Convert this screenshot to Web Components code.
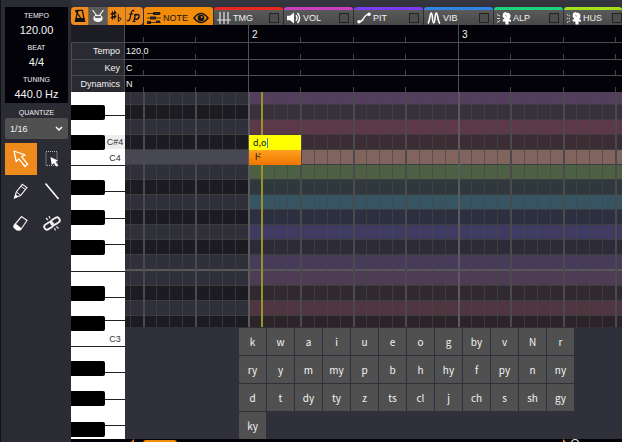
<!DOCTYPE html>
<html lang="en">
<head>
<meta charset="utf-8">
<title>Voice editor</title>
<style>
html,body{margin:0;height:100%;overflow:hidden;background:#2b2b33;color:#f2f2f2;font:9px/12px "Liberation Sans","Noto Sans CJK JP",sans-serif}
</style>
</head>
<body>
<voice-editor></voice-editor>
<script>
const define=(name,html,init)=>customElements.define(name,class extends HTMLElement{
  constructor(){
    super();
    const root=this.attachShadow({mode:'open'});
    root.innerHTML='<style>*{box-sizing:border-box}button{border:0;margin:0;padding:0;color:inherit;font:inherit;background:none}svg{display:block}</style>'+html;
  }
  connectedCallback(){ if(init&&!this.ready){this.ready=true;init(this,this.shadowRoot);} }
});

const singer='<path d="M5.500 5.500 6 2.500 8 1l2 .8L12 2l1.500 2-.3 3-1.200 1 2.500 1.200-.6 1.600-2.500-.3.200 3H8.500l-.2-3-2.600 0V8.500L7.500 8z" fill="#fff"/><path d="m8.500 4 1 1.500" stroke="#777" stroke-width=".8" fill="none"/>';
const icons={
  metronome:'<svg width="14" height="16" viewBox="0 0 14 16"><path d="M3 11 4.6 2.3H9.4L11 11M2.2 2.2 8 10.5" fill="none" stroke="#111" stroke-width="1.3"/><path d="M2.5 10h9l1 4h-11z" fill="#111"/><path d="M3 1.6 5.8 3.4 4 5.2z" fill="#111"/></svg>',
  drum:'<svg width="14" height="16" viewBox="0 0 14 16"><path d="M3 9.2v2.4c0 2.4 8 2.4 8 0V9.2" fill="#ddd" stroke="#fff"/><ellipse cx="7" cy="9" rx="4" ry="1.8" fill="#666" stroke="#fff"/><path d="M1.5 2 6 8M12.5 2 8 8M3 10.5l4 2.5 4-2.5" fill="none" stroke="#fff" stroke-width="1.1"/></svg>',
  accidentals:'<svg width="14" height="16" viewBox="0 0 14 16"><path d="M3.4 3.2v8.6M5.7 2.4V11M9.3 6.2v7.2c2.6-1.2 3-3.2 1.8-3.6q-1-.2-1.8.8" fill="none" stroke="#111"/><path d="M1.8 6.2 7.3 4.6M1.8 9.7 7.3 8.1" stroke="#111" stroke-width="1.7"/></svg>',
  dynamics:'<svg width="16" height="16" viewBox="0 0 16 16"><path d="M8.2 3.2C6.6 1.4 5.6 3 5 6L4 10.5C3.5 12.8 2.4 13.2 1.2 12.2M3 6h4.2M8 7.3l1.5-.8-1.8 7M6.5 13.5h3" fill="none" stroke="#111" stroke-width="1.2"/><path d="M9.3 7.8c1.6-2 4.4-1.6 3.8 1-.5 2.2-3 3.3-4.5 1.7" fill="none" stroke="#111" stroke-width="1.4"/></svg>',
  note:'<svg width="14" height="14" viewBox="0 0 14 14"><path d="M0 2.500h14M0 7h14M0 11.500h14" stroke="#222" stroke-width=".8"/><path d="M6 1h7v3H6zM3 5.500h6v3H3zM0 10h4v3H0zM9 9.500h4v2.400H9z" fill="#222"/></svg>',
  eye:'<svg width="16" height="12" viewBox="0 0 16 12"><path d="M1 6q7-9 14 0-7 9-14 0Z" fill="none" stroke="#151515" stroke-width="1.5"/><circle cx="8" cy="6" r="3.3" fill="#151515"/><circle cx="8.7" cy="5" r="1" fill="#f08c14"/></svg>',
  timing:'<svg width="14" height="14" viewBox="0 0 14 14"><path d="M3 1v12M7 1v12M11 1v12M0 9h14" stroke="#e4e4e4" stroke-width="1.2"/></svg>',
  volume:'<svg width="14" height="14" viewBox="0 0 14 14"><path d="M0 4.7h3L7 1.5v11L3 9.3H0z" fill="#fff"/><path d="M9 4.2q2 2.8 0 5.6M10.5 2q4.2 5 0 10" fill="none" stroke="#fff" stroke-width="1.4"/></svg>',
  pitch:'<svg width="14" height="14" viewBox="0 0 14 14"><path d="M1.8 10.8C8 11 5 3.6 12 3.3" fill="none" stroke="#fff" stroke-width="1.3"/><circle cx="2" cy="10.8" r="1.8" fill="#fff"/><circle cx="12" cy="3.3" r="1.8" fill="#fff"/></svg>',
  vibrato:'<svg width="14" height="14" viewBox="0 0 14 14"><path d="M1 12.5C3 10 2.8 2 4.3 2S5 12 6.7 12 7.600 2 9.300 2 10.500 11 13 12.500" fill="none" stroke="#fff" stroke-width="1.600"/></svg>',
  alpha:`<svg width="14" height="14" viewBox="0 0 14 14"><path d="M0 3.500 3 5M0 7.500h3M0 11.500 3 9.500" stroke="#ddd"/>${singer}</svg>`,
  husky:`<svg width="14" height="14" viewBox="0 0 14 14"><path d="M0 3.500 3 5M0 7.500h3M0 11.500 3 9.500" stroke="#ddd" stroke-width="1.200" stroke-dasharray="1.200 .8"/>${singer}</svg>`,
  arrow:'<svg width="20" height="20" viewBox="0 0 20 20"><path d="m3 2 2.200 10.500 2.700-2.600 6 7.600 2.700-2.300-6-7.500L14.200 6z" fill="none" stroke="#fff" stroke-width="1.300" stroke-linejoin="round"/></svg>',
  marquee:'<svg width="20" height="20" viewBox="0 0 20 20"><path d="M4 2.500h11v14H4z" fill="none" stroke="#bbb" stroke-dasharray="1 1"/><path d="m8.500 8 1.200 8 2-1.700 3 3.500 1.700-1.500-2.900-3.400 2.300-1.500z" fill="#fff"/></svg>',
  pencil:'<svg width="20" height="20" viewBox="0 0 20 20"><path d="m3.500 17 1.800-6 6-7.700 4.600 3.300-6.300 8z" fill="none" stroke="#eee" stroke-width="1.200"/><path d="m5.500 11 4 3.200M9.800 5.200l4.600 3.400" stroke="#eee"/><path d="m3.300 17.200 1.200-4 2.600 2z" fill="#fff"/></svg>',
  line:'<svg width="20" height="20" viewBox="0 0 20 20"><path d="m3.500 2.500 13 15.500" stroke="#fff" stroke-width="1.600"/></svg>',
  eraser:'<svg width="20" height="20" viewBox="0 0 20 20"><path d="M3 12.500 10.500 3.500l5.500 4L9.500 17H6L3 14.500z" fill="none" stroke="#eee" stroke-width="1.200"/><path d="M3.500 11.500 9.500 17H6L2.700 14z" fill="#fff"/><path d="m4.500 10.500 6 4.800-1.500 2H6l-3.300-3z" fill="#fff"/></svg>',
  unlink:'<svg width="20" height="20" viewBox="0 0 20 20"><g fill="none" stroke="#eee" stroke-width="1.900"><rect x="2" y="10" width="9.500" height="5.500" rx="2.700" transform="rotate(-32 6.700 12.700)"/><rect x="8.500" y="5.500" width="9.500" height="5.500" rx="2.700" transform="rotate(-32 13.200 8.200)"/></g><path d="M7 3 8 5.500M4 5l2 2M13.500 17.500l-1-2.500M16.500 15.500l-2-2" stroke="#eee" stroke-width="1.100"/></svg>'
};

define('meter-readout',`<style>
:host{display:block;text-align:center}
div{font-size:7px;line-height:10px}
output{display:block;font-size:11px;line-height:18px}
</style><div><slot name="label"></slot></div><output><slot></slot></output>`);

define('icon-tool',`<style>
:host{display:block}
button{display:flex;width:100%;height:100%;align-items:center;justify-content:center}
:host([active]) button{background:#ee8b1c}
:host([muted]) button{background:#5b5b5b}
</style><button type="button"></button>`,(el,r)=>{
  const b=r.querySelector('button');b.innerHTML=icons[el.getAttribute('icon')];b.setAttribute('aria-label',el.getAttribute('icon'));
});

define('side-panel',`<style>
:host{display:flex;flex-direction:column;padding:7px 3px 0 4px;border-left:1px solid #111}
.meters{background:#020208;padding:4px 0 0;height:96px;display:flex;flex-direction:column;gap:4px}
label{font-size:7px;line-height:10px;text-align:center;padding:5px 0 0;height:15px}
select{appearance:none;width:100%;height:21px;border:0;border-radius:2px;color:#f2f2f2;font:inherit;padding:0 6px 0 5px;
 background:#505050 url("data:image/svg+xml,%3Csvg xmlns='http://www.w3.org/2000/svg' width='8' height='6'%3E%3Cpath d='m1 1 3 3 3-3' fill='none' stroke='white' stroke-width='1.500'/%3E%3C/svg%3E") no-repeat right 5px center}
.tools{display:grid;grid-template-columns:1fr 1fr;grid-auto-rows:32px;padding-top:4px}
</style>
<div class="meters">
<meter-readout><span slot="label">TEMPO</span>120.00</meter-readout>
<meter-readout><span slot="label">BEAT</span>4/4</meter-readout>
<meter-readout><span slot="label">TUNING</span>440.0 Hz</meter-readout>
</div>
<label for="q">QUANTIZE</label><select id="q"><option>1/16</option></select>
<div class="tools"><icon-tool icon="arrow" active></icon-tool><icon-tool icon="marquee"></icon-tool><icon-tool icon="pencil"></icon-tool><icon-tool icon="line"></icon-tool><icon-tool icon="eraser"></icon-tool><icon-tool icon="unlink"></icon-tool></div>`);

define('lane-tab',`<style>
:host{display:flex;flex:0 0 69px;min-width:0;overflow:hidden;background:linear-gradient(#5a5a5a,#484848);border-top:3px solid var(--tab);border-radius:3px 3px 0 0;align-items:center;padding:0 4px 0 3px}
:host(:last-child){flex:0 1 69px;padding-right:0}
button{display:flex;align-items:center;gap:2px;flex:1 0 auto;height:15px}
:host([active]){background:#f28c0a;color:#151515}
:host([active]) input{display:none}
input{appearance:none;flex:0 1 10px;min-width:0;height:10px;margin:0;border:1px solid #222;background:#4c4c4c}
</style><button type="button"><span class="i"></span><slot></slot></button><input type="checkbox" aria-label="Show lane"><slot name="end"></slot>`,(el,r)=>{
  r.querySelector('.i').innerHTML=icons[el.getAttribute('icon')];
});
define('eye-mark',`<style>:host{display:block}</style>${icons.eye}`);

define('lane-bar',`<style>
:host{display:flex;gap:1px;height:25px;padding-top:7px;background:linear-gradient(#363640,#282830);overflow:hidden}
.flags{display:grid;grid-template-columns:repeat(4,1fr);gap:1px;width:72px;flex:none;border-radius:4px;overflow:hidden;background:#9b651f}
</style>
<div class="flags"><icon-tool icon="metronome" active></icon-tool><icon-tool icon="drum" muted></icon-tool><icon-tool icon="accidentals" active></icon-tool><icon-tool icon="dynamics" active></icon-tool></div>
<lane-tab icon="note" active style="--tab:#f28c0a">NOTE<eye-mark slot="end"></eye-mark></lane-tab>
<lane-tab icon="timing" style="--tab:#e8291f">TMG</lane-tab>
<lane-tab icon="volume" style="--tab:#c93fc0">VOL</lane-tab>
<lane-tab icon="pitch" style="--tab:#7b3df2">PIT</lane-tab>
<lane-tab icon="vibrato" style="--tab:#2e86e0">VIB</lane-tab>
<lane-tab icon="alpha" style="--tab:#20d27b">ALP</lane-tab>
<lane-tab icon="husky" style="--tab:#a4e01c">HUS</lane-tab>`);

// Vertical rules repeat once per 210px measure; the first full measure starts 124px in.
const rules=(xs,w,c)=>{
  let s=[],p=0;
  for(const x of xs){s.push(`transparent ${p}px ${x}px`,`${c} ${x}px ${x+w}px`);p=x+w;}
  s.push(`transparent ${p}px 210px`);
  return `linear-gradient(90deg,${s.join(',')}) -87px 0/210px`;
};

define('time-header',`<style>
:host{display:grid;grid-template-columns:54px minmax(0,1fr);grid-template-rows:18px 17px 16px 16px;background:#020208}
div{border-bottom:1px solid #4d4d50;display:flex;align-items:center;min-width:0}
.l{background:#2a2a31;justify-content:flex-end;padding-right:4px;border-left:1px solid #4d4d50;border-right:1px solid #4d4d50}
.l.top{background:#1c1c25;border-left-color:#1c1c25}
.t{padding-left:1px;white-space:nowrap;background:${rules([0],1,'#505054')} 100% repeat-x,${rules([52,105,157],1,'#444448')} 5px repeat-x;background-position:-87px 0,-87px 100%}
.ruler{padding:3px 0 0 127px;font-size:10px}
.ruler span{flex:0 1 210px;min-width:0}
.ruler span:first-child{flex-shrink:0}
div:nth-last-child(-n+2){border-bottom:0}
</style>
<div class="l top"></div><div class="t ruler"><span>2</span><span>3</span></div>
<div class="l">Tempo</div><div class="t">120.0</div><div class="l">Key</div><div class="t">C</div><div class="l">Dynamics</div><div class="t">N</div>`);

define('piano-keys',`<style>
:host{display:grid;background:#fff;color:#333;overflow:hidden}
.w,.b{grid-area:1/1;display:flex;flex-direction:column}
.w div{border-bottom:1px solid #222;padding:0 0 1px 34px;display:flex;align-items:flex-end;justify-content:center;flex:none}
.w .n{border-bottom-color:#fff}
.w .hover{background:linear-gradient(#fff 19px,#eee 19px);}
.b{padding-top:13px;width:34px}
.b div{height:15px;flex:none;background:#000;border-radius:0 2px 2px 0}
</style><div class="w"></div><div class="b"></div>`,(el,r)=>{
  const keys=[[24],[34,'C#4'],[16,'C4'],[26],[27],[26],[27],[26],[23],[26,'C3'],[26],[27],[26],[14]];
  for(const [h,t] of keys){const d=document.createElement('div');d.style.height=h+'px';d.textContent=t||'';if(t==='C#4')d.className='n hover';r.querySelector('.w').append(d);}
  for(const g of [0,15,30,15,15,31,15,30,15,16]){const d=document.createElement('div');d.style.marginTop=g+'px';r.querySelector('.b').append(d);}
});

define('lyric-note',`<style>
:host{position:absolute;left:124px;top:43px;width:52px;display:block;font:9px/14px "Noto Sans CJK JP",sans-serif;color:#111}
.edit{display:flex;align-items:center;height:15px;background:#ff0;padding-left:4px}
input{width:14px;border:0;padding:0;margin:0;background:none;font:inherit;color:inherit;height:14px;outline:0}
i{width:1px;height:10px;background:#2090ff}
.lyric{height:15px;background:linear-gradient(#ffa320,#f07300);padding-left:4px}
</style><div class="edit"><input aria-label="Lyric" value="d,o"><i></i></div><div class="lyric">ド</div>`);

define('note-grid',`<style>
:host{display:block;position:relative;overflow:hidden}
.row{height:15px;display:grid;grid-template-columns:124px 1fr;border-bottom:1px solid #3d3d3f;background:#30303a}
.row:first-child{height:13px}.row:last-child{height:11px;border:0}
.row.black{background:#1b1b21}.row.root{background:#484854}
.row.octave{height:16px;border-bottom:2px solid #58585a}
.row span{grid-column:2}
.lines{position:absolute;inset:0;background:${rules([0],2,'#5b5b5d')} repeat-x,${rules([52,105,157],2,'#4a4a4c')} repeat-x,${rules([13,26,39,66,79,92,118,131,144,171,184,197],1,'rgba(70,70,68,.65)')} repeat-x}
.head{position:absolute;left:136px;top:0;bottom:0;width:2px;background:#97932a}
</style><div class="rows"></div><div class="lines"></div><div class="head"></div><lyric-note></lyric-note>`,(el,r)=>{
  const rows=['533e5e','38303c b','5d3848','3b2d33 b','80645d root','4e6043','2f383c b','375463','2d3041 b','3f3b63','2d2b38 b','463c5a octave','4e3b54','30292f b','503641','2d2429 b'];
  r.querySelector('.rows').innerHTML=rows.map(x=>{const [c,k='']=x.split(' ');return `<div class="row ${k==='b'?'black':k}"><span style="background:#${c}"></span></div>`}).join('');
});

define('phoneme-palette',`<style>
:host{position:absolute;left:114px;top:236px;display:grid;grid-template-columns:repeat(12,27px);grid-auto-rows:27px;gap:1px}
button{background:#505050;color:#f4f4f4;font:10px/26px "Noto Sans CJK JP",sans-serif}
</style>`,(el,r)=>{
  'k w a i u e o g by v N r ry y m my p b h hy f py n ny d t dy ty z ts cl j ch s sh gy ky'.split(' ').forEach(t=>{const b=document.createElement('button');b.type='button';b.textContent=t;r.append(b);});
});

define('scroll-strip',`<style>
:host{display:flex;height:3px;background:#020208;overflow:hidden;align-items:flex-start;padding:0 40px 0 60px}
svg{flex:none}
.track{flex:1;padding-left:8px}
.thumb{width:34px;height:8px;margin-top:1px;border-radius:3px;background:#f28c0a}
</style><svg width="4" height="3"><path d="M3 0v3H0z" fill="#f28c0a"/></svg><div class="track"><div class="thumb"></div></div><svg width="20" height="3"><path d="m1 0 3 3H1z" fill="#f28c0a"/><circle cx="13" cy="4" r="3.500" fill="none" stroke="#ddd" stroke-width="1.200"/></svg>`);

define('voice-editor',`<style>
:host{display:grid;grid-template-columns:71px minmax(0,1fr);height:100vh}
main{display:grid;grid-template-columns:minmax(0,1fr);grid-template-rows:auto auto minmax(0,1fr) auto;min-height:0}
.roll{display:grid;grid-template-columns:54px minmax(0,1fr);min-height:0}
.canvas{position:relative;background:#30303a;overflow:hidden}
</style><side-panel></side-panel><main><lane-bar></lane-bar><time-header></time-header>
<div class="roll"><piano-keys></piano-keys><div class="canvas"><note-grid></note-grid><phoneme-palette></phoneme-palette></div></div><scroll-strip></scroll-strip></main>`);
</script>
</body>
</html>
